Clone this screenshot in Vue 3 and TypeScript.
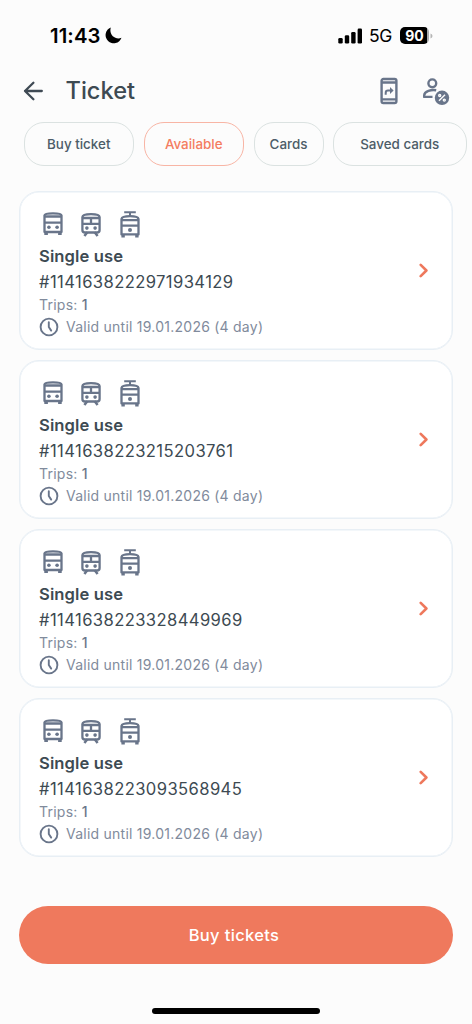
<script setup lang="ts">
interface Ticket {
  id: string
  trips: number
  validity: string
}

const tabs: { label: string; key: string; active?: boolean }[] = [
  { label: 'Buy ticket', key: 'buy' },
  { label: 'Available', key: 'available', active: true },
  { label: 'Cards', key: 'cards' },
  { label: 'Saved cards', key: 'saved' },
]

const validity = 'Valid until 19.01.2026 (4 day)'
const tickets: Ticket[] = [
  { id: '#1141638222971934129', trips: 1, validity },
  { id: '#1141638223215203761', trips: 1, validity },
  { id: '#1141638223328449969', trips: 1, validity },
  { id: '#1141638223093568945', trips: 1, validity },
]
</script>

<template>
  <div class="screen">
    <div class="status">
      <span class="time">11:43</span>
      <svg class="moon" width="17" height="17" viewBox="0 0 17 17">
        <path d="M5.8 .4A8.2 8.2 0 1 0 16.5 10.8C10.5 13.2 3.6 8 5.8 .4Z" fill="#000" />
      </svg>
      <span class="spacer"></span>
      <svg width="25" height="16" viewBox="0 0 25 16" fill="#000">
        <rect x=".3" y="10" width="4.4" height="5.6" rx="1.3" />
        <rect x="6.8" y="7.2" width="4.4" height="8.4" rx="1.3" />
        <rect x="13.2" y="4" width="4.4" height="11.6" rx="1.3" />
        <rect x="19.6" y=".6" width="4.4" height="15" rx="1.3" />
      </svg>
      <span class="network">5G</span>
      <span class="battery"><span class="level">90</span></span>
      <svg class="nub" width="3" height="6" viewBox="0 0 3 6"><path d="M.5.5Q2.5 1.4 2.5 3T.5 5.5Z" fill="#b5b5b5" /></svg>
    </div>

    <header class="header">
      <svg class="back" width="21" height="20" viewBox="0 0 21 20" fill="none" stroke="#3f4a54" stroke-width="2.3" stroke-linecap="round" stroke-linejoin="round">
        <path d="M18.8 10H2M10.4 1.8 2 10l8.4 8.2" />
      </svg>
      <h1>Ticket</h1>
      <span class="spacer"></span>
      <svg class="phone" width="18" height="28" viewBox="0 0 18 28" fill="none" stroke="#69758a" stroke-width="2.4">
        <rect x="1.6" y="2" width="14.8" height="24" rx="1.8" />
        <path d="M1.6 5.5h14.8M1.6 22.4h14.8" />
        <path d="M5.7 17.7v-1.8q0-2.3 2.3-2.3h3.2" stroke-width="2" />
        <path d="M10 9.9 13.6 13.5 10 17.1Z" fill="#69758a" stroke="none" />
      </svg>
      <svg width="28" height="28" viewBox="0 0 28 28" fill="none" stroke="#69758a" stroke-width="2.4">
        <circle cx="10.3" cy="6.3" r="3.9" />
        <path d="M14.2 13.2C9.4 12.3 2.3 14.2 2.2 18.2v1.7h8.3" stroke-linejoin="round" />
        <circle cx="20" cy="20.8" r="7.2" fill="#69758a" stroke="none" />
        <g stroke="#fcfcfc" stroke-width="1.4">
          <path d="M17 23.8 23 17.8" />
          <circle cx="17.7" cy="18.5" r="1" />
          <circle cx="22.3" cy="23.1" r="1" />
        </g>
      </svg>
    </header>

    <nav class="tabs">
      <button v-for="tab in tabs" :key="tab.key" :class="['tab', tab.key, { active: tab.active }]">{{ tab.label }}</button>
    </nav>

    <main class="list">
      <article v-for="ticket in tickets" :key="ticket.id" class="card">
        <div class="details">
          <div class="modes">
            <svg width="20" height="27" viewBox="0 0 20 27" fill="none" stroke="#69758a" stroke-width="2.3">
              <path d="M1.5 21V4.4Q1.7 2.3 10 2.3t8.5 2.1V21Z" stroke-linejoin="round" />
              <path d="M1.4 5.5h17.2M1.4 11.6h17.2" />
              <path d="M3.1 21.5v2.6M16.9 21.5v2.6" stroke-width="3.6" />
              <circle cx="5.9" cy="16.3" r="1.8" fill="#69758a" stroke="none" />
              <circle cx="14.1" cy="16.3" r="1.8" fill="#69758a" stroke="none" />
            </svg>
            <svg width="20" height="27" viewBox="0 0 20 27" fill="none" stroke="#69758a" stroke-width="2.3">
              <path d="M1.4 18.9V6.1Q1.6 3.2 10 3.2t8.6 2.9v12.8q0 2.6-2.6 2.6H4q-2.6 0-2.6-2.6Z" />
              <path d="M1.6 7h16.8M1.6 12.8h16.8M10 6.6v6.2" />
              <path d="M6.3 21.2 3.4 25M13.7 21.2l2.9 3.8" stroke-width="2.5" />
              <circle cx="5.9" cy="17.1" r="1.8" fill="#69758a" stroke="none" />
              <circle cx="14.1" cy="17.1" r="1.8" fill="#69758a" stroke="none" />
            </svg>
            <svg width="20" height="27" viewBox="0 0 20 27" fill="none" stroke="#69758a" stroke-width="2.3">
              <path d="M4.2 1.3h11.6M10 1.3v4" stroke-width="2" />
              <path d="M1.5 23.4V8Q2 5.2 10 5.2T18.5 8v15.4Z" stroke-linejoin="round" />
              <path d="M1.4 9.2h17.2M1.4 14.6h17.2" />
              <path d="M3.1 23.8v2.8M16.9 23.8v2.8" stroke-width="3.4" />
              <circle cx="10" cy="18.9" r="2" fill="#69758a" stroke="none" />
            </svg>
          </div>
          <div class="name">Single use</div>
          <div class="number">{{ ticket.id }}</div>
          <div class="trips">Trips: <b>{{ ticket.trips }}</b></div>
          <div class="valid">
            <svg width="20" height="20" viewBox="0 0 20 20" fill="none" stroke="#69758a" stroke-width="1.9">
              <circle cx="10" cy="10" r="8.4" />
              <path d="M9.8 5.2V10l2.4 3.6" stroke-linecap="round" />
            </svg>
            <span>{{ ticket.validity }}</span>
          </div>
        </div>
        <svg class="chevron" width="10" height="16" viewBox="0 0 10 16" fill="none" stroke="#ee785c" stroke-width="2.6">
          <path d="M1.7 1.8 7.4 7.5 1.7 13.2" stroke-linecap="round" stroke-linejoin="round" />
        </svg>
      </article>
    </main>

    <button class="buy-button">Buy tickets</button>
    <div class="home-bar"></div>
  </div>
</template>

<style>
body {
  background: #fcfcfc;
}
</style>

<style scoped>
.screen {
  box-sizing: border-box;
  width: 472px;
  height: 1024px;
  overflow: hidden;
  display: flex;
  flex-direction: column;
  background: #fcfcfc;
  font-family: Inter, "Liberation Sans", sans-serif;
  color: #3d4a52;
}
svg {
  display: block;
  flex: none;
}
.spacer {
  flex: 1;
}
.status {
  height: 71px;
  box-sizing: border-box;
  padding: 0 39px 0 50px;
  display: flex;
  align-items: center;
  color: #000;
}
.time {
  width: 55px;
  font-size: 20.3px;
  font-weight: 600;
  line-height: 24px;
  letter-spacing: 0.1px;
  white-space: nowrap;
}
.network {
  width: 25px;
  margin: 0 0 0 6px;
  font-size: 17.5px;
  line-height: 22px;
  font-weight: 400;
  letter-spacing: -0.4px;
}
.battery {
  width: 29px;
  height: 17px;
  margin-left: 6px;
  border-radius: 5px;
  background: linear-gradient(90deg, #000 93%, #aaa 93%);
}
.level {
  display: block;
  text-align: center;
  color: #fff;
  font-size: 14px;
  font-weight: 700;
  line-height: 17px;
}
.nub {
  margin-left: 1px;
}
.header {
  height: 41px;
  box-sizing: border-box;
  padding: 0 22px 1px 23px;
  display: flex;
  align-items: center;
}
h1 {
  margin: 0 0 0 21.5px;
  font-size: 23.6px;
  line-height: 30px;
  font-weight: 500;
  letter-spacing: 0;
}
.phone {
  margin-right: 24px;
}
.tabs {
  display: flex;
  gap: 9.5px;
  height: 44px;
  margin: 10px 0 25px 23.5px;
}
.tab {
  flex: none;
  box-sizing: border-box;
  height: 44px;
  padding: 0;
  border: 1px solid #dbe2e1;
  border-radius: 20px;
  background: transparent;
  font: 550 13.4px/20px Inter, "Liberation Sans", sans-serif;
  color: #4c5d68;
}
.tab.active {
  border-color: #f8b5a5;
  color: #f47c61;
}
.buy { width: 110.5px; }
.available { width: 100.5px; }
.cards { width: 70px; }
.saved { width: 133.5px; }
.list {
  display: flex;
  flex-direction: column;
  gap: 10px;
  padding: 0 19px;
}
.card {
  box-sizing: border-box;
  height: 159px;
  padding: 19px 23px 0 19px;
  border: 1px solid #e8eff5;
  border-radius: 20px;
  background: #fff;
  box-shadow: inset 0 0 0 0.5px #e8eff5;
  display: flex;
  justify-content: space-between;
}
.modes {
  display: flex;
  gap: 18.5px;
  padding-left: 4px;
  margin: 0 0 5px -0.5px;
}
.name {
  font-size: 16.6px;
  font-weight: 600;
  line-height: 26px;
  letter-spacing: 0.1px;
}
.number {
  font-size: 16.6px;
  line-height: 27px;
  margin-bottom: -2px;
  letter-spacing: 0.4px;
}
.trips,
.valid {
  font-size: 14px;
  line-height: 22px;
  letter-spacing: 0.24px;
  color: #818b9c;
}
.trips b {
  font-weight: 500;
  color: #69758a;
}
.valid {
  display: flex;
  align-items: center;
  gap: 7px;
  white-space: nowrap;
}
.chevron {
  margin-top: 52px;
}
.buy-button {
  flex: none;
  width: 434px;
  height: 58px;
  margin: 49px 0 0 19px;
  padding: 0 4px 0 0;
  border: 0;
  border-radius: 29px;
  background: #ef795d;
  color: #fff;
  font: 500 16.5px/24px Inter, "Liberation Sans", sans-serif;
  letter-spacing: 0.35px;
}
.home-bar {
  width: 168px;
  height: 6px;
  margin: 44px 0 0 152px;
  border-radius: 3px;
  background: #000;
}
</style>
